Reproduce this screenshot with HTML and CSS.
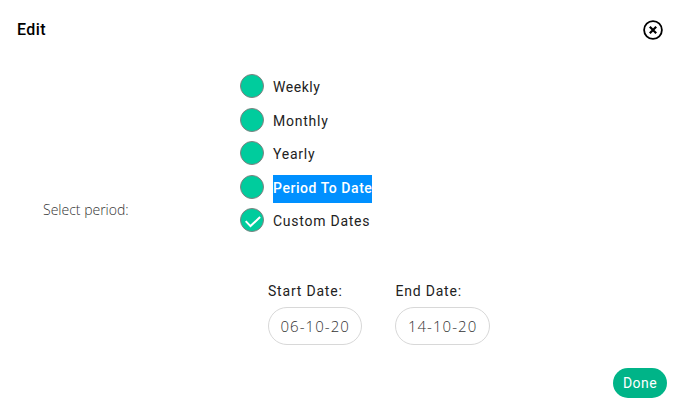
FILE: index.html
```html
<!DOCTYPE html>
<html lang="en">
<head>
<meta charset="utf-8">
<title>Edit</title>
<link rel="stylesheet" href="styles.css">
</head>
<body>
<main class="dialog">
  <header class="header">
    <h1 class="title">Edit</h1>
    <button class="close" aria-label="Close">
      <svg width="20" height="20" viewBox="0 0 20 20" fill="none" stroke="#000"><circle cx="10" cy="10" r="8.9" stroke-width="1.8"/><path d="M6.8 6.8l6.4 6.4M13.2 6.8l-6.4 6.4" stroke-width="2.2"/></svg>
    </button>
  </header>
  <section class="content">
    <div class="prompt">Select period:</div>
    <div class="fields">
      <ul class="options">
        <li class="option"><i class="radio"></i><span>Weekly</span></li>
        <li class="option"><i class="radio"></i><span class="monthly">Monthly</span></li>
        <li class="option"><i class="radio"></i><span class="yearly">Yearly</span></li>
        <li class="option"><i class="radio"></i><span class="selected">Period To Date</span></li>
        <li class="option"><i class="radio"><svg width="22" height="22" viewBox="0 0 22 22" fill="none" stroke="#fff" stroke-width="2"><path d="M4.7 12.1l4.8 5L19.1 8"/></svg></i><span class="custom">Custom Dates</span></li>
      </ul>
      <div class="dates">
        <label class="date"><span class="date-label">Start Date:</span><span class="input">06-10-20</span></label>
        <label class="date"><span class="date-label">End Date:</span><span class="input">14-10-20</span></label>
      </div>
    </div>
  </section>
  <footer class="footer"><button class="done">Done</button></footer>
</main>
</body>
</html>
```
FILE: styles.css
```css
* { box-sizing: border-box; }
body { margin: 0; background: #fff; font-family: Roboto, "Liberation Sans", sans-serif; color: #222; }
.dialog { width: 679px; height: 412px; overflow: hidden; }
.header { height: 74px; padding: 20px 16px 0 17px; display: flex; justify-content: space-between; align-items: flex-start; }
.title { margin: 0; font-size: 16px; line-height: 20px; font-weight: 500; letter-spacing: 0.4px; color: #000; }
.close { padding: 0; border: 0; background: none; width: 20px; height: 20px; }
.close svg { display: block; }
.content { display: grid; grid-template-columns: 240px 1fr; height: 271px; align-items: center; }
.prompt { padding: 1px 0 0 43px; font: 300 14px/20px "Open Sans", sans-serif; color: #333; white-space: nowrap; }
.fields { height: 271px; display: flex; flex-direction: column; justify-content: space-between; }
.options { list-style: none; margin: 0; padding: 0; }
.option { display: flex; align-items: center; gap: 9px; height: 24px; margin-bottom: 9.5px; font-size: 14px; letter-spacing: 0.55px; white-space: nowrap; }
.option span { line-height: 28px; margin-top: 2px; }
.option .monthly, .option .yearly { letter-spacing: 0.75px; }
.option .custom { letter-spacing: 0.75px; }
.radio { width: 24px; height: 24px; border: 1px solid #808080; border-radius: 50%; background: #00cc9d; flex: none; }
.radio svg { display: block; }
.option .selected { width: 99px; margin-top: 4px; line-height: 27px; height: 28px; background: #0090ff; color: #fff; font-weight: 500; }
.dates { display: flex; gap: 33px; padding-left: 28px; }
.date { width: 94.4px; display: flex; flex-direction: column; gap: 6px; }
.date-label { font-size: 14px; line-height: 20px; letter-spacing: 0.8px; white-space: nowrap; }
.input { height: 38px; padding-left: 11.5px; border: 1px solid #d8d8d8; border-radius: 19px; font: 300 15px/36px "Open Sans", sans-serif; letter-spacing: 1.05px; color: #333; white-space: nowrap; }
.footer { display: flex; justify-content: flex-end; padding: 23px 12px 0 0; }
.done { width: 54px; height: 30px; padding: 0; border: 0; border-radius: 15px; background: #00b488; color: #fff; font: 400 14px/30px Roboto, sans-serif; letter-spacing: 0.4px; }
```
